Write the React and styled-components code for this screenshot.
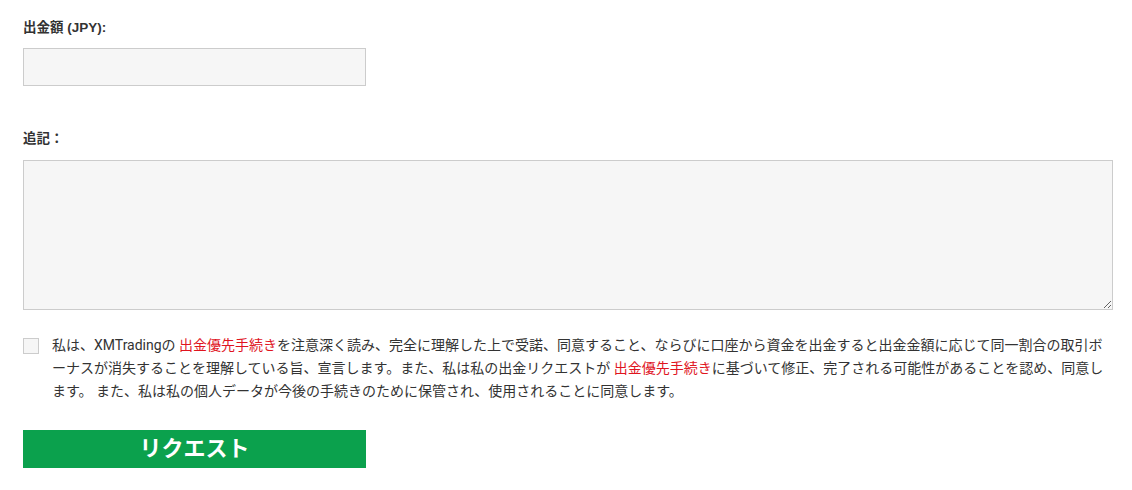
import React from 'react';
import styled, { createGlobalStyle } from 'styled-components';

const GlobalStyle = createGlobalStyle`
  html, body {
    margin: 0;
    padding: 0;
    background: #fff;
  }
  body {
    font-family: Roboto, "Noto Sans CJK JP", "Noto Sans", sans-serif;
    color: #333;
  }
`;

const Form = styled.form`
  display: flex;
  flex-direction: column;
  padding: 19px 19px 0 23px;
`;

const Field = styled.div`
  display: flex;
  flex-direction: column;
  margin-bottom: ${(p) => p.gap || 0}px;
`;

const Label = styled.label`
  font-family: "Liberation Sans", "Noto Sans CJK JP", sans-serif;
  font-size: 13.5px;
  font-weight: 700;
  line-height: 18px;
  color: #333;
  margin-bottom: ${(p) => p.space || 11}px;
`;

const TextInput = styled.input`
  box-sizing: border-box;
  width: 343px;
  height: 38px;
  border: 1px solid #ccc;
  background: #f6f6f6;
  padding: 6px 10px;
  font-size: 14px;
  outline: none;
`;

const TextArea = styled.textarea`
  box-sizing: border-box;
  width: 1090px;
  height: 150px;
  border: 1px solid #ccc;
  background: #f6f6f6;
  padding: 6px 10px;
  font-size: 14px;
  font-family: inherit;
  outline: none;
  resize: both;
  display: block;
`;

const Agreement = styled.div`
  display: flex;
  align-items: flex-start;
  gap: 13px;
  margin-top: 24px;
`;

const Check = styled.input`
  appearance: none;
  -webkit-appearance: none;
  flex: none;
  box-sizing: border-box;
  width: 16px;
  height: 16px;
  margin: 4px 0 0 0;
  border: 1px solid #ccc;
  background: #f6f6f6;
`;

const AgreeText = styled.p`
  margin: 0;
  font-size: 14px;
  line-height: 23px;
  color: #333;
  width: 1060px;
`;

const RedLink = styled.a`
  color: #e0141e;
  text-decoration: none;
`;

const SubmitButton = styled.button`
  width: 343px;
  height: 38px;
  margin-top: 27px;
  border: none;
  background: #0ba14d;
  color: #fff;
  font-family: Roboto, "Noto Sans CJK JP", sans-serif;
  font-size: 22px;
  font-weight: 700;
  line-height: 38px;
  padding: 0;
  cursor: pointer;
`;

function App() {
  return (
    <>
      <GlobalStyle />
      <Form onSubmit={(e) => e.preventDefault()}>
        <Field gap={44}>
          <Label>出金額 (JPY):</Label>
          <TextInput type="text" />
        </Field>
        <Field>
          <Label space={12}>追記：</Label>
          <TextArea />
        </Field>
        <Agreement>
          <Check type="checkbox" />
          <AgreeText>
            私は、XMTradingの <RedLink href="#">出金優先手続き</RedLink>
            を注意深く読み、完全に理解した上で受諾、同意すること、ならびに口座から資金を出金すると出金金額に応じて同一割合の取引ボーナスが消失することを理解している旨、宣言します。また、私は私の出金リクエストが{' '}
            <RedLink href="#">出金優先手続き</RedLink>
            に基づいて修正、完了される可能性があることを認め、同意します。 また、私は私の個人データが今後の手続きのために保管され、使用されることに同意します。
          </AgreeText>
        </Agreement>
        <SubmitButton type="submit">リクエスト</SubmitButton>
      </Form>
    </>
  );
}

export default App;
